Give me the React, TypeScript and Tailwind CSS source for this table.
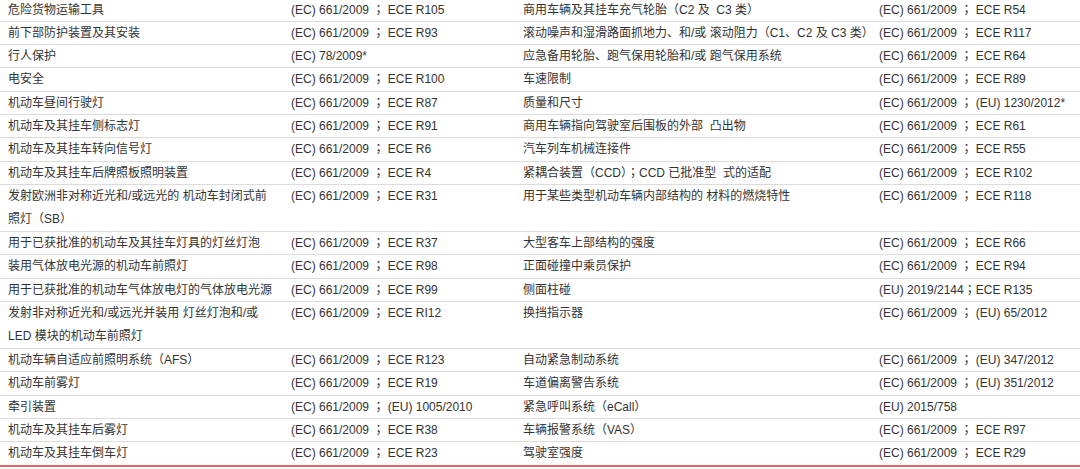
import React from 'react'

type Row = { a: string[]; b: string; c: string; d: string }

const rows: Row[] = [
  { a: ['危险货物运输工具'], b: '(EC) 661/2009 ； ECE R105', c: '商用车辆及其挂车充气轮胎（C2 及\u00a0 C3 类）', d: '(EC) 661/2009 ； ECE R54' },
  { a: ['前下部防护装置及其安装'], b: '(EC) 661/2009 ； ECE R93', c: '滚动噪声和湿滑路面抓地力、和/或 滚动阻力（C1、C2 及 C3 类）', d: '(EC) 661/2009 ； ECE R117' },
  { a: ['行人保护'], b: '(EC) 78/2009*', c: '应急备用轮胎、跑气保用轮胎和/或 跑气保用系统', d: '(EC) 661/2009 ； ECE R64' },
  { a: ['电安全'], b: '(EC) 661/2009 ； ECE R100', c: '车速限制', d: '(EC) 661/2009 ； ECE R89' },
  { a: ['机动车昼间行驶灯'], b: '(EC) 661/2009 ； ECE R87', c: '质量和尺寸', d: '(EC) 661/2009 ； (EU) 1230/2012*' },
  { a: ['机动车及其挂车侧标志灯'], b: '(EC) 661/2009 ； ECE R91', c: '商用车辆指向驾驶室后围板的外部\u00a0 凸出物', d: '(EC) 661/2009 ； ECE R61' },
  { a: ['机动车及其挂车转向信号灯'], b: '(EC) 661/2009 ； ECE R6', c: '汽车列车机械连接件', d: '(EC) 661/2009 ； ECE R55' },
  { a: ['机动车及其挂车后牌照板照明装置'], b: '(EC) 661/2009 ； ECE R4', c: '紧耦合装置（CCD）；CCD 已批准型\u00a0 式的适配', d: '(EC) 661/2009 ； ECE R102' },
  { a: ['发射欧洲非对称近光和/或远光的 机动车封闭式前', '照灯（SB）'], b: '(EC) 661/2009 ； ECE R31', c: '用于某些类型机动车辆内部结构的 材料的燃烧特性', d: '(EC) 661/2009 ； ECE R118' },
  { a: ['用于已获批准的机动车及其挂车灯具的灯丝灯泡'], b: '(EC) 661/2009 ； ECE R37', c: '大型客车上部结构的强度', d: '(EC) 661/2009 ； ECE R66' },
  { a: ['装用气体放电光源的机动车前照灯'], b: '(EC) 661/2009 ； ECE R98', c: '正面碰撞中乘员保护', d: '(EC) 661/2009 ； ECE R94' },
  { a: ['用于已获批准的机动车气体放电灯的气体放电光源'], b: '(EC) 661/2009 ； ECE R99', c: '侧面柱碰', d: '(EU) 2019/2144；ECE R135' },
  { a: ['发射非对称近光和/或远光并装用 灯丝灯泡和/或', 'LED 模块的机动车前照灯'], b: '(EC) 661/2009 ； ECE RI12', c: '换挡指示器', d: '(EC) 661/2009 ； (EU) 65/2012' },
  { a: ['机动车辆自适应前照明系统（AFS）'], b: '(EC) 661/2009 ； ECE R123', c: '自动紧急制动系统', d: '(EC) 661/2009 ； (EU) 347/2012' },
  { a: ['机动车前雾灯'], b: '(EC) 661/2009 ； ECE R19', c: '车道偏离警告系统', d: '(EC) 661/2009 ； (EU) 351/2012' },
  { a: ['牵引装置'], b: '(EC) 661/2009 ； (EU) 1005/2010', c: '紧急呼叫系统（eCall）', d: '(EU) 2015/758' },
  { a: ['机动车及其挂车后雾灯'], b: '(EC) 661/2009 ； ECE R38', c: '车辆报警系统（VAS）', d: '(EC) 661/2009 ； ECE R97' },
  { a: ['机动车及其挂车倒车灯'], b: '(EC) 661/2009 ； ECE R23', c: '驾驶室强度', d: '(EC) 661/2009 ； ECE R29' },
]

// the fullwidth semicolon sits centred in the reference, so take it from the TC face
function Txt({ s }: { s: string }) {
  const parts = s.split('；')
  return (
    <>
      {parts.map((p, i) => (
        <React.Fragment key={i}>
          {i > 0 && <span className="leading-[0] font-['Noto_Sans_CJK_TC',sans-serif]">；</span>}
          {p}
        </React.Fragment>
      ))}
    </>
  )
}

export default function App() {
  return (
    <main className="w-[1080px] h-[469px] overflow-hidden bg-white text-[12px] text-[#333] font-['Liberation_Sans','Noto_Sans_CJK_SC',sans-serif]">
      <div className="-mt-[1.5px]">
        {rows.map((r, i) => {
          const last = i === rows.length - 1
          const lh = r.a.length > 1 ? 'leading-[23px]' : 'leading-[22.33px]'
          return (
            <div
              key={i}
              className={`grid grid-cols-[283px_232px_356px_1fr] whitespace-pre ${lh} ${
                last ? 'border-b-2 border-[#e26464]' : 'border-b border-[#dcdcdc]'
              }`}
            >
              <div className="pl-2">
                {r.a.map((line, j) => (
                  <div key={j}>{line}</div>
                ))}
              </div>
              <div className="pl-2"><Txt s={r.b} /></div>
              <div className="pl-2"><Txt s={r.c} /></div>
              <div className="pl-2"><Txt s={r.d} /></div>
            </div>
          )
        })}
      </div>
    </main>
  )
}
